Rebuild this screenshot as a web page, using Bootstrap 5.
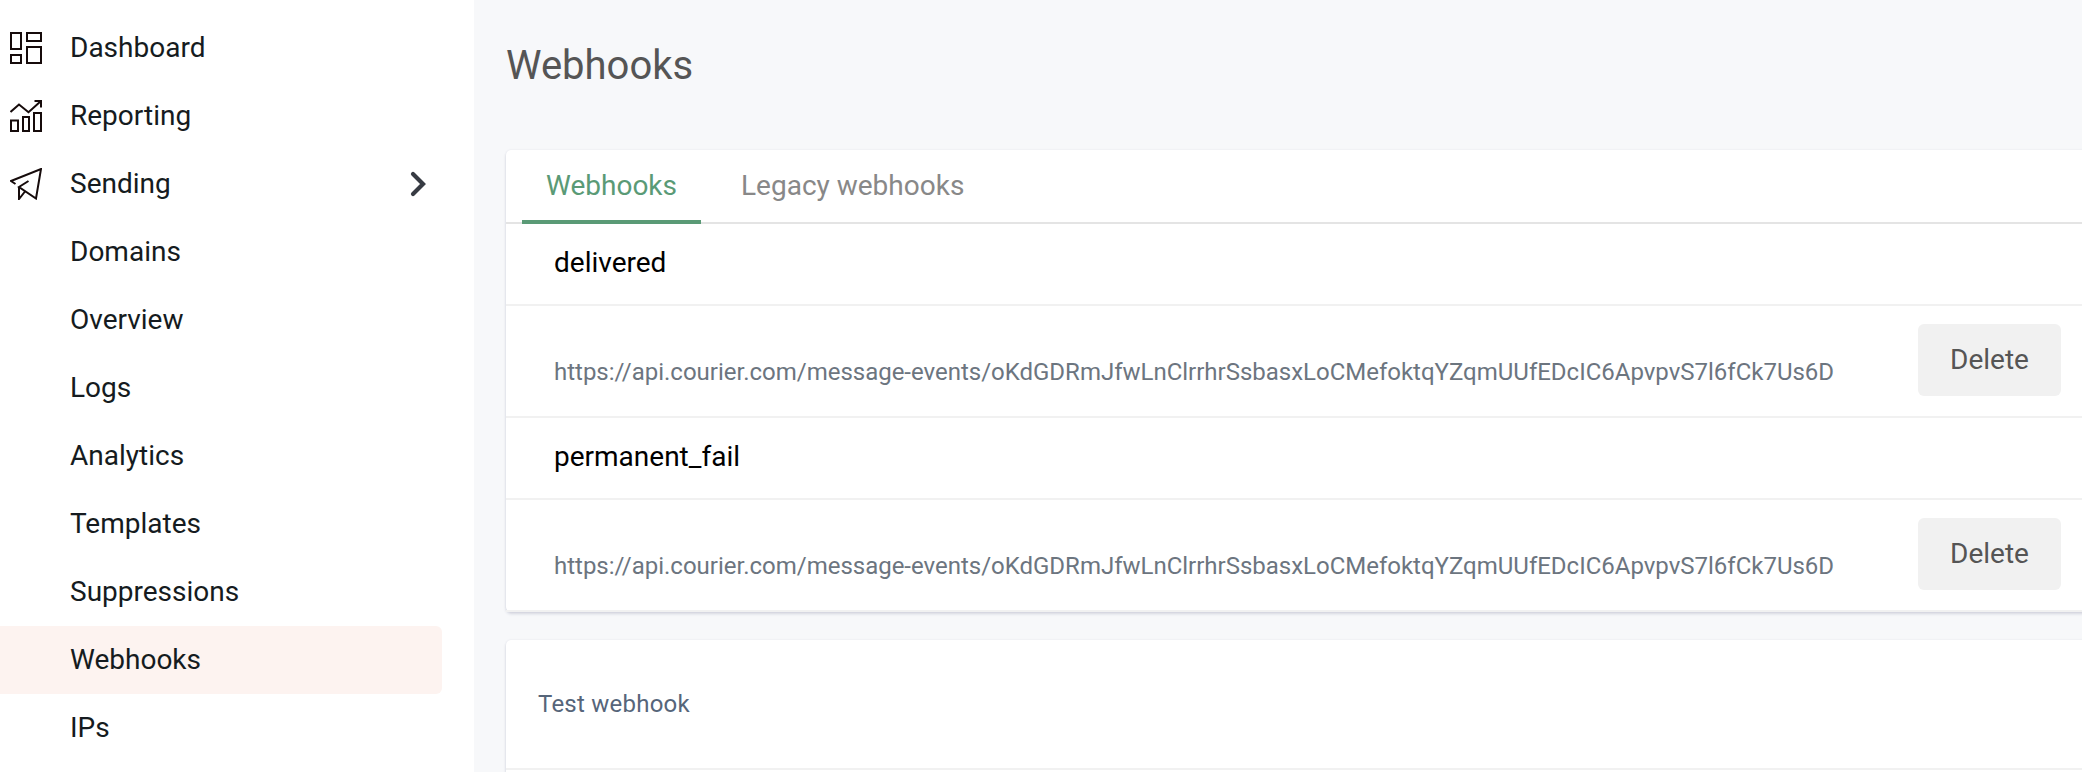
<!DOCTYPE html>
<html lang="en">
<head>
<meta charset="utf-8">
<meta name="viewport" content="width=device-width, initial-scale=1">
<title>Webhooks</title>
<link href="https://cdn.jsdelivr.net/npm/bootstrap@5.3.0/dist/css/bootstrap.min.css" rel="stylesheet">
<style>
  body { font-family: Roboto, "Liberation Sans", sans-serif; font-size: 28px; line-height: 40px; background: #f7f8fa; color: #181e24; }
  .sidebar { width: 474px; padding: 14px 32px 0 0; background: #fff; }
  .sidebar .nav-link { height: 68px; padding: 0 16px 0 70px; color: #151b20; }
  .sidebar .nav-link.with-icon { padding-left: 10px; }
  .with-icon .nav-icon { width: 32px; height: 32px; margin-right: 28px; }
  .chevron { width: 16px; height: 26px; }
  .sidebar .nav-link.active { background: #fdf3f0; border-radius: 0 6px 6px 0; }
  .nav-icon, .chevron { fill: none; flex: none; }
  .nav-icon { stroke: #160b0b; stroke-width: 2; }
  .content { padding-left: 32px; }
  .page-title { font-size: 40px; line-height: 48px; padding-top: 42px; margin-bottom: 60px; color: #555; }
  .panel { margin-right: -24px; border: 0; border-radius: 5px; box-shadow: 0 2px 3px rgba(60,65,110,.18), 0 0 2px rgba(60,65,110,.1); color: #000; }
  .panel + .panel { margin-top: 28px; }
  .tabs { height: 74px; padding-left: 16px; border-bottom: 2px solid #e4e4e4; }
  .tabs .nav-link { height: 74px; padding: 16px 24px 14px; color: #888; border-bottom: 4px solid transparent; }
  .tabs .nav-link.active { color: #5a9a76; border-color: #5a9a76; }
  .event-name { height: 82px; padding: 0 48px 2px; border-bottom: 2px solid #f1f1f1; }
  .event-row { height: 112px; padding: 0 45px 0 48px; border-bottom: 2px solid #f1f1f1; }
  .event-url { font-size: 24px; letter-spacing: -.01px; color: #6c757f; padding-top: 22px; }
  .btn-delete { width: 143px; height: 72px; margin-bottom: 2px; font-size: 28px; background: #f1f1f1; color: #555; border: 0; border-radius: 6px; padding: 0; }
  .test-title { height: 130px; padding: 0 32px; font-size: 24px; letter-spacing: .24px; color: #56657a; border-bottom: 2px solid #f1f1f1; }
</style>
</head>
<body>
<div class="d-flex vh-100 overflow-hidden">
  <nav class="sidebar nav flex-column flex-nowrap flex-shrink-0">
    <a class="nav-link with-icon d-flex align-items-center" href="#">
      <svg class="nav-icon" viewBox="0 0 32 32"><path d="M1 1h10v16H1zM17 1h14v8H17zM1 23h10v8H1zM17 15h14v16H17z"/></svg>Dashboard</a>
    <a class="nav-link with-icon d-flex align-items-center" href="#">
      <svg class="nav-icon" viewBox="0 0 32 32"><path d="M1 20.5h7V31H1zM13 17h6v14h-6zM24 13h7v18h-7zM.5 12 9 4.500 18.500 12.200 31 1M24.500 1H31v6.500"/></svg>Reporting</a>
    <a class="nav-link with-icon d-flex align-items-center" href="#">
      <svg class="nav-icon" viewBox="0 0 32 32"><path d="M5.500 16 1 13 31 1 26 30.500 9 19 18.500 13M9 19V31L15 23.500"/></svg>Sending
      <svg class="chevron ms-auto" viewBox="0 0 16 26"><path d="M3 3 13 13 3 23" stroke="#373b43" stroke-width="4.200" stroke-linecap="round"/></svg></a>
    <a class="nav-link d-flex align-items-center" href="#">Domains</a>
    <a class="nav-link d-flex align-items-center" href="#">Overview</a>
    <a class="nav-link d-flex align-items-center" href="#">Logs</a>
    <a class="nav-link d-flex align-items-center" href="#">Analytics</a>
    <a class="nav-link d-flex align-items-center" href="#">Templates</a>
    <a class="nav-link d-flex align-items-center" href="#">Suppressions</a>
    <a class="nav-link active d-flex align-items-center" href="#">Webhooks</a>
    <a class="nav-link d-flex align-items-center" href="#">IPs</a>
  </nav>
  <main class="content flex-grow-1 overflow-hidden">
    <h1 class="page-title fw-normal">Webhooks</h1>
    <section class="panel card">
      <div class="tabs nav">
        <a class="nav-link active" href="#">Webhooks</a>
        <a class="nav-link ms-3" href="#">Legacy webhooks</a>
      </div>
      <div class="event-name d-flex align-items-center">delivered</div>
      <div class="event-row d-flex align-items-center justify-content-between">
        <span class="event-url">https://api.courier.com/message-events/oKdGDRmJfwLnClrrhrSsbasxLoCMefoktqYZqmUUfEDcIC6ApvpvS7l6fCk7Us6D</span>
        <button class="btn btn-delete" type="button">Delete</button>
      </div>
      <div class="event-name d-flex align-items-center">permanent_fail</div>
      <div class="event-row d-flex align-items-center justify-content-between">
        <span class="event-url">https://api.courier.com/message-events/oKdGDRmJfwLnClrrhrSsbasxLoCMefoktqYZqmUUfEDcIC6ApvpvS7l6fCk7Us6D</span>
        <button class="btn btn-delete" type="button">Delete</button>
      </div>
    </section>
    <section class="panel card">
      <div class="test-title d-flex align-items-center">Test webhook</div>
      <div class="py-5"></div>
    </section>
  </main>
</div>
<script src="https://cdn.jsdelivr.net/npm/bootstrap@5.3.0/dist/js/bootstrap.bundle.min.js"></script>
</body>
</html>
